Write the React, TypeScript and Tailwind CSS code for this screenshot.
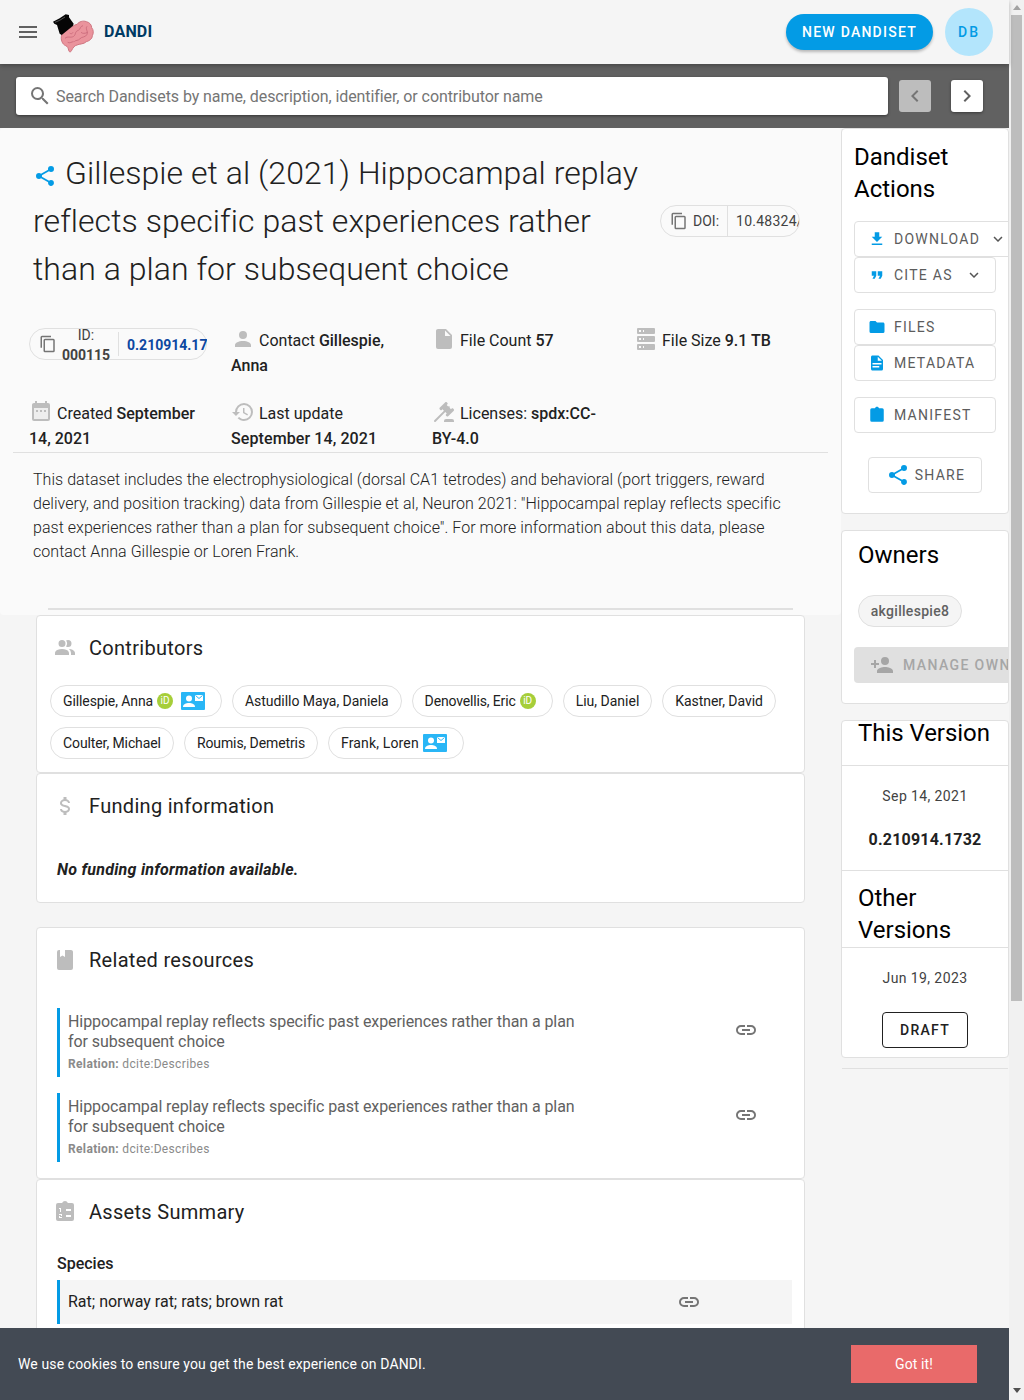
import type { ReactNode } from 'react'

const mdi = {
  menu: 'M3,6H21V8H3V6M3,11H21V13H3V11M3,16H21V18H3V16Z',
  magnify: 'M9.5,3A6.5,6.5 0 0,1 16,9.5C16,11.11 15.41,12.59 14.44,13.73L14.71,14H15.5L20.5,19L19,20.5L14,15.5V14.71L13.73,14.44C12.59,15.41 11.11,16 9.5,16A6.5,6.5 0 0,1 3,9.5A6.5,6.5 0 0,1 9.5,3M9.5,5C7,5 5,7 5,9.5C5,12 7,14 9.5,14C12,14 14,12 14,9.5C14,7 12,5 9.5,5Z',
  left: 'M15.41,16.58L10.83,12L15.41,7.41L14,6L8,12L14,18L15.41,16.58Z',
  right: 'M8.59,16.58L13.17,12L8.59,7.41L10,6L16,12L10,18L8.59,16.58Z',
  down: 'M7.41,8.58L12,13.17L16.59,8.58L18,10L12,16L6,10L7.41,8.58Z',
  share: 'M18,16.08C17.24,16.08 16.56,16.38 16.04,16.85L8.91,12.7C8.96,12.47 9,12.24 9,12C9,11.76 8.96,11.53 8.91,11.3L15.96,7.19C16.5,7.69 17.21,8 18,8A3,3 0 0,0 21,5A3,3 0 0,0 18,2A3,3 0 0,0 15,5C15,5.24 15.04,5.47 15.09,5.7L8.04,9.81C7.5,9.31 6.79,9 6,9A3,3 0 0,0 3,12A3,3 0 0,0 6,15C6.79,15 7.5,14.69 8.04,14.19L15.16,18.34C15.11,18.55 15.08,18.77 15.08,19C15.08,20.61 16.39,21.91 18,21.91C19.61,21.91 20.92,20.61 20.92,19A2.92,2.92 0 0,0 18,16.08Z',
  copy: 'M19,21H8V7H19M19,5H8A2,2 0 0,0 6,7V21A2,2 0 0,0 8,23H19A2,2 0 0,0 21,21V7A2,2 0 0,0 19,5M16,1H4A2,2 0 0,0 2,3V17H4V3H16V1Z',
  account: 'M12,4A4,4 0 0,1 16,8A4,4 0 0,1 12,12A4,4 0 0,1 8,8A4,4 0 0,1 12,4M12,14C16.42,14 20,15.79 20,18V20H4V18C4,15.79 7.58,14 12,14Z',
  file: 'M13,9V3.5L18.5,9M6,2C4.89,2 4,2.89 4,4V20A2,2 0 0,0 6,22H18A2,2 0 0,0 20,20V8L14,2H6Z',
  server: 'M4,1H20A1,1 0 0,1 21,2V6A1,1 0 0,1 20,7H4A1,1 0 0,1 3,6V2A1,1 0 0,1 4,1M4,9H20A1,1 0 0,1 21,10V14A1,1 0 0,1 20,15H4A1,1 0 0,1 3,14V10A1,1 0 0,1 4,9M4,17H20A1,1 0 0,1 21,18V22A1,1 0 0,1 20,23H4A1,1 0 0,1 3,22V18A1,1 0 0,1 4,17M9,5H10V3H9V5M9,13H10V11H9V13M9,21H10V19H9V21M5,3V5H7V3H5M5,11V13H7V11H5M5,19V21H7V19H5Z',
  calendar: 'M9,10H7V12H9V10M13,10H11V12H13V10M17,10H15V12H17V10M19,3H18V1H16V3H8V1H6V3H5C3.89,3 3,3.9 3,5V19A2,2 0 0,0 5,21H19A2,2 0 0,0 21,19V5A2,2 0 0,0 19,3M19,19H5V8H19V19Z',
  history: 'M13.5,8H12V13L16.28,15.54L17,14.33L13.5,12.25V8M13,3A9,9 0 0,0 4,12H1L4.96,16.03L9,12H6A7,7 0 0,1 13,5A7,7 0 0,1 20,12A7,7 0 0,1 13,19C11.07,19 9.32,18.21 8.06,16.94L6.64,18.36C8.27,20 10.5,21 13,21A9,9 0 0,0 22,12A9,9 0 0,0 13,3',
  gavel: 'M2.3,20.28L11.9,10.68L10.5,9.26L9.78,9.97C9.39,10.36 8.76,10.36 8.37,9.97L7.66,9.26C7.27,8.87 7.27,8.24 7.66,7.85L13.32,2.19C13.71,1.8 14.34,1.8 14.73,2.19L15.44,2.9C15.83,3.29 15.83,3.92 15.44,4.31L14.73,5L16.15,6.43C16.54,6.04 17.17,6.04 17.56,6.43C17.95,6.82 17.95,7.46 17.56,7.85L18.97,9.26L19.68,8.55C20.07,8.16 20.71,8.16 21.1,8.55L21.8,9.26C22.19,9.65 22.19,10.29 21.8,10.68L16.15,16.33C15.76,16.72 15.12,16.72 14.73,16.33L14.03,15.63C13.63,15.24 13.63,14.6 14.03,14.21L14.73,13.5L13.32,12.09L3.71,21.7C3.32,22.09 2.69,22.09 2.3,21.7C1.91,21.31 1.91,20.67 2.3,20.28M20,19A2,2 0 0,1 22,21V22H12V21A2,2 0 0,1 14,19H20Z',
  people: 'M16 17V19H2V17S2 13 9 13 16 17 16 17M12.5 7.5A3.5 3.5 0 1 0 9 11A3.5 3.5 0 0 0 12.5 7.5M15.94 13A5.32 5.32 0 0 1 18 17V19H22V17S22 13.37 15.94 13M15 4A3.39 3.39 0 0 0 13.07 4.59A5 5 0 0 1 13.07 10.41A3.39 3.39 0 0 0 15 11A3.5 3.5 0 0 0 15 4Z',
  usd: 'M7,15H9C9,16.08 10.37,17 12,17C13.63,17 15,16.08 15,15C15,13.9 13.96,13.5 11.76,12.97C9.64,12.44 7,11.78 7,9C7,7.21 8.47,5.69 10.5,5.18V3H13.5V5.18C15.53,5.69 17,7.21 17,9H15C15,7.92 13.63,7 12,7C10.37,7 9,7.92 9,9C9,10.1 10.04,10.5 12.24,11.03C14.36,11.56 17,12.22 17,15C17,16.79 15.53,18.31 13.5,18.82V21H10.5V18.82C8.47,18.31 7,16.79 7,15Z',
  book: 'M18,22A2,2 0 0,0 20,20V4C20,2.89 19.1,2 18,2H12V9L9.5,7.5L7,9V2H6A2,2 0 0,0 4,4V20A2,2 0 0,0 6,22H18Z',
  clipboardList: 'M5 3H9.18C9.6 1.84 10.7 1 12 1C13.3 1 14.4 1.84 14.82 3H19A2 2 0 0 1 21 5V19A2 2 0 0 1 19 21H5A2 2 0 0 1 3 19V5A2 2 0 0 1 5 3M13 9V11H18V9H13M13 15V17H18V15H13M6 8V9H7V12H8V8H6M6 14V15H8V16H6V18H9V17H7V16H9V14H6Z',
  link: 'M3.9,12C3.9,10.29 5.29,8.9 7,8.9H11V7H7A5,5 0 0,0 2,12A5,5 0 0,0 7,17H11V15.1H7C5.29,15.1 3.9,13.71 3.9,12M8,13H16V11H8V13M17,7H13V8.9H17C18.71,8.9 20.1,10.29 20.1,12C20.1,13.71 18.71,15.1 17,15.1H13V17H17A5,5 0 0,0 22,12A5,5 0 0,0 17,7Z',
  download: 'M5,20H19V18H5M19,9H15V3H9V9H5L12,16L19,9Z',
  quote: 'M14,17H17L19,13V7H13V13H16M6,17H9L11,13V7H5V13H8L6,17Z',
  folder: 'M10,4H4C2.89,4 2,4.89 2,6V18A2,2 0 0,0 4,20H20A2,2 0 0,0 22,18V8C22,6.89 21.1,6 20,6H12L10,4Z',
  doc: 'M13,9H18.5L13,3.5V9M6,2H14L20,8V20A2,2 0 0,1 18,22H6C4.89,22 4,21.1 4,20V4C4,2.89 4.89,2 6,2M15,18V16H6V18H15M18,14V12H6V14H18Z',
  clipboard: 'M5 3H9.18C9.6 1.84 10.7 1 12 1C13.3 1 14.4 1.84 14.82 3H19A2 2 0 0 1 21 5V19A2 2 0 0 1 19 21H5A2 2 0 0 1 3 19V5A2 2 0 0 1 5 3Z',
  accountPlus: 'M15,14C12.33,14 7,15.33 7,18V20H23V18C23,15.33 17.67,14 15,14M6,10V7H4V10H1V12H4V15H6V12H9V10M15,12A4,4 0 0,0 19,8A4,4 0 0,0 15,4A4,4 0 0,0 11,8A4,4 0 0,0 15,12Z',
}

function Icon({ d, className, body }: { d: string; className: string; body?: boolean }) {
  return (
    <svg viewBox="0 0 24 24" className={className} fill="currentColor">
      {body && <rect x="5" y="8" width="14" height="11" fill="#eeeeee" />}
      <path d={d} />
    </svg>
  )
}

function Logo() {
  return (
    <svg viewBox="0 0 180 150" className="ml-[5px] h-[50px] w-[60px] shrink-0">
      <path
        d="M50 84C54 76 66 72 72 64C80 62 86 54 96 52C102 44 114 40 124 44C134 46 140 54 140 62C146 68 146 80 142 86C142 96 132 102 124 104C116 112 104 110 96 114C88 116 84 122 80 130C78 136 72 136 71 130C70 124 68 118 62 116C52 112 46 98 50 84Z"
        fill="#ea939c"
        stroke="#cf7681"
        strokeWidth="3"
      />
      <path
        d="M60 94C68 86 76 94 86 88C94 82 88 74 100 70C108 66 104 58 114 56M126 58C120 66 130 72 126 82C122 92 110 88 104 96C100 102 92 98 88 104M68 106C74 110 80 104 86 104M108 76C112 80 120 80 128 76M74 78C78 82 82 80 84 76"
        fill="none"
        stroke="#c9697a"
        strokeWidth="2.5"
      />
      <path d="M24 44L44 34L62 22L72 24L72 31L86 50L84 56L50 84L44 80L36 54L28 50Z" fill="#050505" />
      <path d="M30 46L44 40L60 30" fill="none" stroke="#9a9a9a" strokeWidth="1.5" />
    </svg>
  )
}

function Orcid() {
  return (
    <span className="ml-[4px] mr-[4px] flex h-4 w-4 shrink-0 items-center justify-center rounded-full bg-[#a6ce39] text-[10px] leading-none tracking-normal text-white">
      iD
    </span>
  )
}

function Mail() {
  return (
    <svg viewBox="0 0 24 18" className="ml-[4px] mr-[4px] h-[18px] w-6 shrink-0">
      <rect width="24" height="18" rx="1" fill="#29b6f6" />
      <circle cx="8" cy="6.5" r="3" fill="#fff" />
      <path d="M2 15c0-3 3-4 6-4s6 1 6 4z" fill="#fff" />
      <rect x="14" y="3" width="8" height="6" fill="#fff" />
      <path d="M14.5 3.5L18 6.5L21.5 3.5" fill="none" stroke="#29b6f6" />
    </svg>
  )
}

function Meta({ d, children, body }: { d: string; children: ReactNode; body?: boolean }) {
  return (
    <div className="h-[50px] pr-[20px] text-base leading-[25px] text-[#212121]">
      <Icon d={d} body={body} className="mr-[4px] inline-block h-6 w-6 align-[-5px] text-[#bdbdbd]" />
      {children}
    </div>
  )
}

function ActionButton({ d, label, className, chevron }: { d: string; label: string; className: string; chevron?: string }) {
  return (
    <div className={`flex h-9 shrink-0 items-center rounded border border-[#e0e0e0] bg-white pl-[13px] text-sm tracking-[1.25px] text-[#5c5c5c] ${className}`}>
      <Icon d={d} className="mr-[8px] h-[18px] w-[18px] shrink-0 text-[#039be5]" />
      <span>{label}</span>
      {chevron && <Icon d={mdi.down} className={`h-[18px] w-[18px] shrink-0 text-[#555] ${chevron}`} />}
    </div>
  )
}

function Section({ d, title, className, children }: { d: string; title: string; className: string; children: ReactNode }) {
  return (
    <section className={`mx-[36px] rounded border border-[#e0e0e0] bg-white ${className}`}>
      <div className="flex h-[64px] items-center pl-[16px]">
        <Icon d={d} className="h-6 w-6 shrink-0 text-[#bdbdbd]" />
        <h2 className="ml-[12px] text-xl font-normal tracking-[0.3px] text-[#212121]">{title}</h2>
      </div>
      {children}
    </section>
  )
}

function Chip({ name, orcid, mail, className }: { name: string; orcid?: boolean; mail?: boolean; className: string }) {
  return (
    <span className={`flex h-8 items-center rounded-full border border-[#e0e0e0] bg-white pl-[12px] pr-[12px] text-sm text-[#212121] ${className}`}>
      {name}
      {orcid && <Orcid />}
      {mail && <Mail />}
    </span>
  )
}

function Related() {
  return (
    <div className="flex h-[69px] border-l-[3px] border-[#039be5] pl-[8px]">
      <div className="w-[520px] pt-[4px]">
        <p className="text-base leading-5 tracking-[-0.08px] text-[#616161]">
          Hippocampal replay reflects specific past experiences rather than a plan for subsequent choice
        </p>
        <p className="mt-[4px] text-xs leading-4 tracking-[0.35px] text-[#8a8a8a]">
          <span className="font-bold">Relation:</span> dcite:Describes
        </p>
      </div>
      <Icon d={mdi.link} className="ml-[146px] mt-[10px] h-6 w-6 text-[#757575]" />
    </div>
  )
}

export default function App() {
  return (
    <div className="relative flex h-[1400px] overflow-hidden bg-[#f5f5f5] font-['Roboto',sans-serif]">
      <div className="w-[1009px] shrink-0">
        {/* App bar */}
        <header className="relative z-10 flex h-[64px] items-center bg-[#f5f5f5] pl-[16px] pr-[16px] shadow-[0_2px_4px_rgba(0,0,0,0.25)]">
          <Icon d={mdi.menu} className="h-6 w-6 text-[#616161]" />
          <Logo />
          <span className="ml-[-1px] text-base font-bold tracking-[0.2px] text-[#003a63]">DANDI</span>
          <div className="ml-auto flex h-9 w-[147px] items-center justify-center rounded-full bg-[#039be5] text-sm font-medium tracking-[1.25px] text-white shadow-[0_2px_3px_rgba(0,0,0,0.25)]">
            NEW DANDISET
          </div>
          <div className="ml-[12px] flex h-12 w-12 items-center justify-center rounded-full bg-[#b3e5fc] text-sm font-medium tracking-[2px] text-[#039be5]">
            DB
          </div>
        </header>

        {/* Search */}
        <div className="flex h-[64px] items-center bg-[#616161] pl-[16px]">
          <div className="flex h-[38px] w-[872px] items-center rounded-[3px] bg-white pl-[12px] shadow-[0_1px_3px_rgba(0,0,0,0.45)]">
            <Icon d={mdi.magnify} className="h-6 w-6 text-[#757575]" />
            <span className="ml-[4px] pt-px text-base tracking-[-0.08px] text-[#757575]">
              Search Dandisets by name, description, identifier, or contributor name
            </span>
          </div>
          <div className="ml-[11px] flex h-8 w-8 items-center justify-center rounded-[3px] bg-[#bdbdbd]">
            <Icon d={mdi.left} className="h-6 w-6 text-[#757575]" />
          </div>
          <div className="ml-[20px] flex h-8 w-8 items-center justify-center rounded-[3px] bg-white shadow-[0_1px_3px_rgba(0,0,0,0.4)]">
            <Icon d={mdi.right} className="h-6 w-6 text-[#616161]" />
          </div>
        </div>

        <div className="flex">
          {/* Main column */}
          <main className="w-[841px] shrink-0">
            <div className="h-[487px] rounded bg-[#fafafa] pt-[21px]">
              <div className="flex items-center pl-[33px]">
                <h1 className="w-[627px] text-[32px] font-light leading-[48px] tracking-[0.05px] text-[#212121]">
                  <Icon d={mdi.share} className="mr-[8px] inline-block h-6 w-6 align-[-4px] text-[#039be5]" />
                  Gillespie et al (2021) Hippocampal replay reflects specific past experiences rather than a plan for subsequent choice
                </h1>
                <div className="flex h-8 w-[140px] items-center overflow-hidden rounded-full border border-[#e0e0e0] pl-[9px] text-sm text-[#424242]">
                  <Icon d={mdi.copy} className="h-[18px] w-[18px] shrink-0 text-[#757575]" />
                  <span className="ml-[5px] shrink-0">DOI:</span>
                  <span className="ml-[8px] h-full shrink-0 border-l border-[#e0e0e0] pl-[8px] leading-[30px] tracking-[0.25px]">10.48324/dandi.000115</span>
                </div>
              </div>

              <div className="mt-[34px] grid grid-cols-[202px_201px_202px_194px] gap-y-[23px] pl-[29px]">
                <div className="mt-px flex h-8 w-[178px] items-center rounded-full border border-[#e0e0e0] pl-[9px] text-sm text-[#424242]">
                  <Icon d={mdi.copy} className="h-[18px] w-[18px] shrink-0 text-[#757575]" />
                  <span className="ml-[4px] mt-[2px] w-[50px] shrink-0 text-center leading-5">
                    ID: <b className="font-bold">000115</b>
                  </span>
                  <span className="ml-[7px] flex h-[24px] w-[89px] shrink-0 items-center overflow-hidden whitespace-nowrap border-l border-[#e0e0e0] pl-[8px] pt-px font-bold text-[#0d47a1]">
                    0.210914.1732
                  </span>
                </div>
                <Meta d={mdi.account}>Contact <b className="font-medium">Gillespie, Anna</b></Meta>
                <Meta d={mdi.file}>File Count <b className="font-medium">57</b></Meta>
                <Meta d={mdi.server}>File Size <b className="font-medium">9.1 TB</b></Meta>
                <Meta d={mdi.calendar} body>Created <b className="font-medium">September 14, 2021</b></Meta>
                <Meta d={mdi.history}>Last update <b className="font-medium tracking-[0.1px]">September 14, 2021</b></Meta>
                <Meta d={mdi.gavel}>Licenses: <b className="font-medium">spdx:CC-BY-4.0</b></Meta>
              </div>

              <div className="mx-[13px] mt-[2px] border-t border-[#e0e0e0]" />
              <p className="ml-[33px] mt-[15px] w-[760px] text-base font-light leading-6 tracking-[0.04px] text-[#212121]">
                This dataset includes the electrophysiological (dorsal CA1 tetrodes) and behavioral (port triggers, reward delivery, and position tracking) data from Gillespie et al, Neuron 2021: "Hippocampal replay reflects specific past experiences rather than a plan for subsequent choice". For more information about this data, please contact Anna Gillespie or Loren Frank.
              </p>
              <div className="ml-[48px] mt-[44px] h-[2px] w-[745px] bg-[#e0e0e0]" />
            </div>

            <Section d={mdi.people} title="Contributors" className="h-[158px]">
              <div className="ml-[13px] mt-[5px] flex w-[740px] flex-wrap gap-x-[10px] gap-y-[10px]">
                <Chip name="Gillespie, Anna" orcid mail className="tracking-[-0.1px]" />
                <Chip name="Astudillo Maya, Daniela" className="tracking-[-0.05px]" />
                <Chip name="Denovellis, Eric" orcid className="tracking-[-0.15px]" />
                <Chip name="Liu, Daniel" className="tracking-normal" />
                <Chip name="Kastner, David" className="tracking-[-0.05px]" />
                <Chip name="Coulter, Michael" className="tracking-[-0.1px]" />
                <Chip name="Roumis, Demetris" className="tracking-[-0.1px]" />
                <Chip name="Frank, Loren" mail className="tracking-[0.15px]" />
              </div>
            </Section>

            <Section d={mdi.usd} title="Funding information" className="h-[130px]">
              <p className="ml-[20px] mt-[20px] text-base font-bold italic leading-6 tracking-[0.27px] text-[#212121]">
                No funding information available.
              </p>
            </Section>

            <Section d={mdi.book} title="Related resources" className="mt-[24px] h-[252px]">
              <div className="ml-[20px] mt-[16px] flex flex-col gap-[16px]">
                <Related />
                <Related />
              </div>
            </Section>

            <Section d={mdi.clipboardList} title="Assets Summary" className="h-[300px]">
              <h3 className="ml-[20px] mt-[8px] text-base font-medium leading-6 text-[#212121]">Species</h3>
              <div className="ml-[20px] mt-[4px] flex h-[44px] w-[735px] items-center border-l-[3px] border-[#039be5] bg-[#f5f5f5] pl-[8px] text-base text-[#212121]">
                <span className="w-[609px]">Rat; norway rat; rats; brown rat</span>
                <Icon d={mdi.link} className="h-6 w-6 text-[#757575]" />
              </div>
            </Section>
          </main>

          {/* Side column */}
          <aside className="w-[168px] shrink-0">
            <div className="h-[386px] overflow-hidden rounded border border-[#e0e0e0] bg-white pl-[12px]">
              <h2 className="pt-[12px] text-2xl font-normal leading-8 text-black">
                Dandiset
                <br />
                Actions
              </h2>
              <div className="mt-[16px] flex flex-col">
                <ActionButton d={mdi.download} label="DOWNLOAD" chevron="ml-[9px]" className="w-[160px]" />
                <ActionButton d={mdi.quote} label="CITE AS" chevron="ml-[12px]" className="w-[142px]" />
                <ActionButton d={mdi.folder} label="FILES" className="mt-[16px] w-[142px]" />
                <ActionButton d={mdi.doc} label="METADATA" className="w-[142px]" />
                <ActionButton d={mdi.clipboard} label="MANIFEST" className="mt-[16px] w-[142px]" />
                <div className="ml-[14px] mt-[24px] flex h-9 w-[114px] items-center justify-center rounded border border-[#e0e0e0] pl-px text-sm tracking-[1.25px] text-[#5c5c5c]">
                  <Icon d={mdi.share} className="mr-[5px] h-6 w-6 text-[#039be5]" />
                  SHARE
                </div>
              </div>
            </div>

            <div className="mt-[16px] h-[174px] overflow-hidden rounded border border-[#e0e0e0] bg-white">
              <h2 className="pl-[16px] pt-[8px] text-2xl font-normal leading-8 text-black">Owners</h2>
              <span className="ml-[16px] mt-[24px] flex h-8 w-[104px] items-center justify-center rounded-full border border-[#e0e0e0] bg-[#f5f5f5] text-sm font-medium tracking-[0.3px] text-[#616161]">
                akgillespie8
              </span>
              <div className="ml-[12px] mt-[20px] flex h-9 w-[190px] items-center rounded bg-[#e0e0e0] pl-[16px] text-sm font-medium tracking-[1.4px] text-[#a6a6a6]">
                <Icon d={mdi.accountPlus} className="mr-[9px] h-6 w-6 shrink-0 text-[#a6a6a6]" />
                <span className="whitespace-nowrap">MANAGE OWNERS</span>
              </div>
            </div>

            <div className="mt-[16px] h-[338px] rounded border border-[#e0e0e0] bg-white">
              <h2 className="h-[45px] border-b border-[#e0e0e0] pl-[16px] text-2xl font-normal leading-6 tracking-[-0.05px] text-black">
                This Version
              </h2>
              <div className="h-[105px] border-b border-[#e0e0e0] pt-[20px] text-center">
                <p className="text-sm leading-5 tracking-[0.4px] text-[#424242]">Sep 14, 2021</p>
                <p className="mt-[22px] text-base font-bold leading-6 tracking-[0.2px] text-[#212121]">0.210914.1732</p>
              </div>
              <h2 className="h-[77px] border-b border-[#e0e0e0] pl-[16px] pt-[11px] text-2xl font-normal leading-8 text-black">
                Other
                <br />
                Versions
              </h2>
              <p className="pt-[20px] text-center text-sm leading-5 tracking-[0.4px] text-[#424242]">Jun 19, 2023</p>
              <div className="mx-auto mt-[24px] flex h-9 w-[86px] items-center justify-center rounded border border-[#212121] text-sm font-medium tracking-[1.25px] text-[#212121]">
                DRAFT
              </div>
            </div>
            <div className="mx-px mt-[10px] border-t border-[#e0e0e0]" />
          </aside>
        </div>
      </div>

      {/* Scrollbar */}
      <div className="flex w-[15px] shrink-0 flex-col items-center bg-[#f1f1f1]">
        <svg viewBox="0 0 8 5" className="mt-[5px] h-[5px] w-2 text-[#a3a3a3]" fill="currentColor">
          <path d="M4 0L8 5H0Z" />
        </svg>
        <div className="mt-[5px] h-[986px] w-[11px] bg-[#bdbdbd]" />
        <svg viewBox="0 0 8 5" className="mt-[387px] h-[5px] w-2 text-[#505050]" fill="currentColor">
          <path d="M0 0H8L4 5Z" />
        </svg>
      </div>

      {/* Cookie banner */}
      <div className="absolute bottom-0 left-0 flex h-[72px] w-[1009px] items-center bg-[#434a54] pl-[18px] pr-[32px] text-sm tracking-[0.12px] text-white">
        <span>We use cookies to ensure you get the best experience on DANDI.</span>
        <div className="ml-auto flex h-[38px] w-[126px] items-center justify-center bg-[#e96a6a] text-sm">Got it!</div>
      </div>
    </div>
  )
}
